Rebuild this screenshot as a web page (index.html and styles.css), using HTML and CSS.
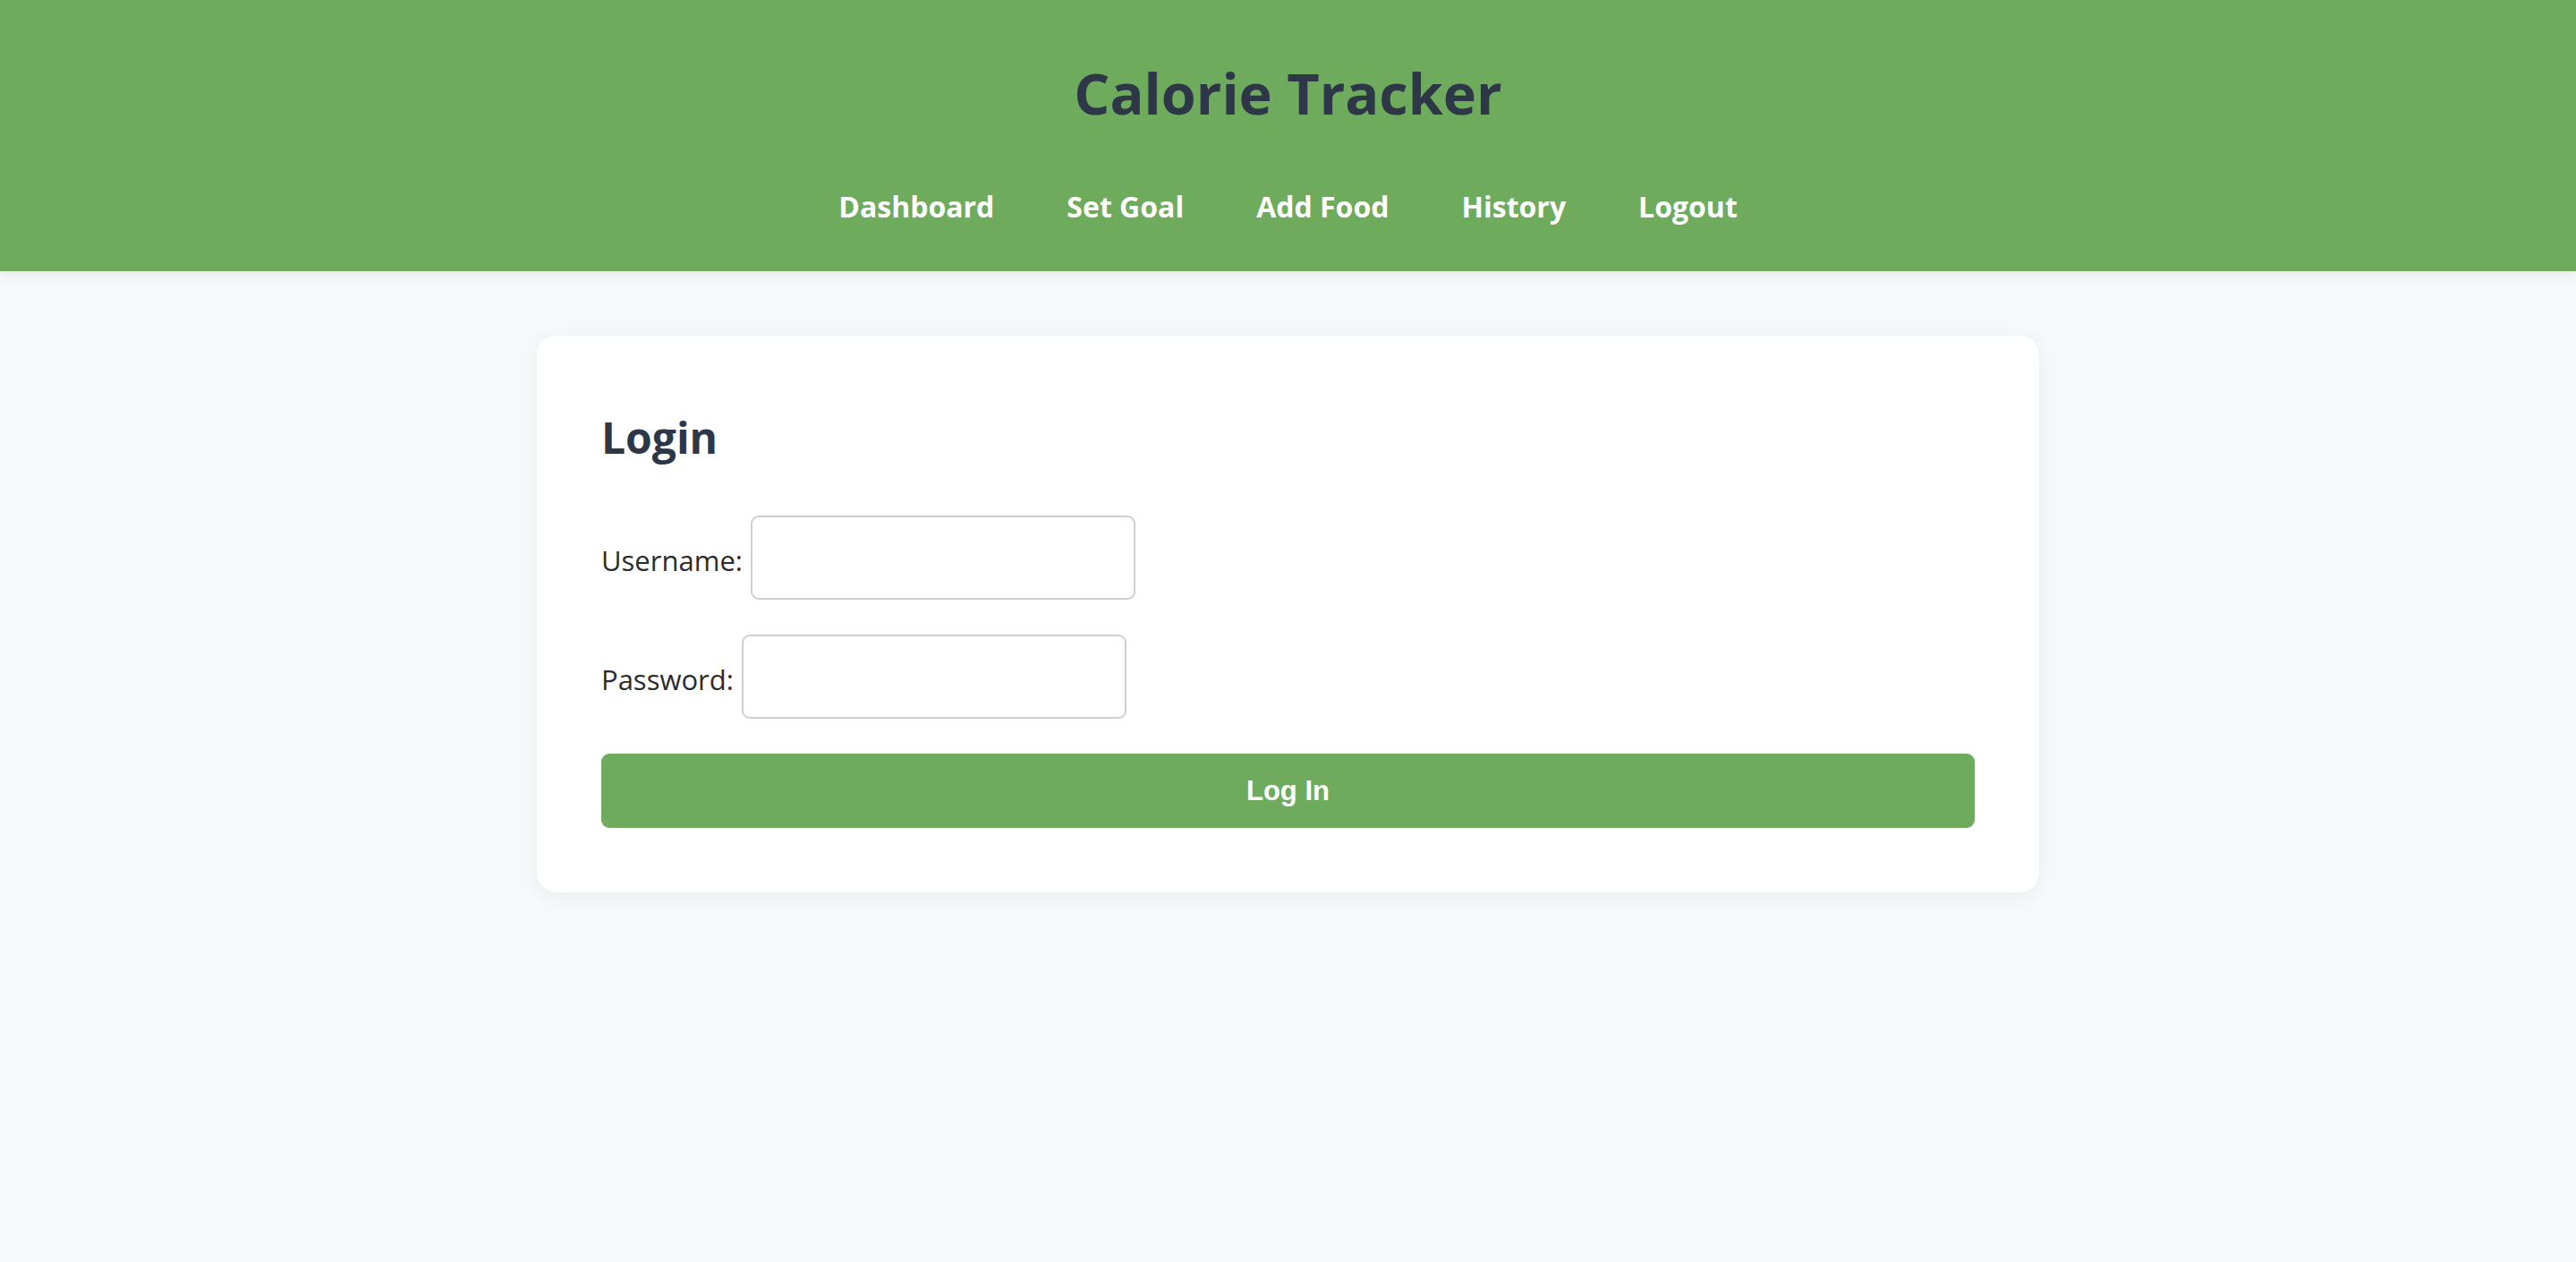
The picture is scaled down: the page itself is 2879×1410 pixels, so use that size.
FILE: index.html
```html
<!DOCTYPE html>
<html lang="en">
<head>
<meta charset="utf-8">
<title>Calorie Tracker</title>
<link rel="stylesheet" href="styles.css">
</head>
<body>
<header class="site-header">
  <h1 class="site-title">Calorie Tracker</h1>
  <nav class="site-nav">
    <a href="#" class="nav-link">Dashboard</a>
    <a href="#" class="nav-link">Set Goal</a>
    <a href="#" class="nav-link">Add Food</a>
    <a href="#" class="nav-link">History</a>
    <a href="#" class="nav-link">Logout</a>
  </nav>
</header>
<main class="container">
  <section class="card">
    <h2 class="card-title">Login</h2>
    <form class="login-form">
      <div class="form-row">
        <label class="form-label" for="username">Username:</label>
        <input class="form-input" type="text" id="username">
      </div>
      <div class="form-row">
        <label class="form-label" for="password">Password:</label>
        <input class="form-input" type="password" id="password">
      </div>
      <button class="btn-primary" type="button">Log In</button>
    </form>
  </section>
</main>
</body>
</html>
```
FILE: styles.css
```css
* { box-sizing: border-box; }
html, body { margin: 0; padding: 0; }
body {
  background: #f7f8fa;
  font-family: "Open Sans", "Noto Sans", sans-serif;
  color: #333;
  min-height: 1410px;
}
.site-header {
  background: #6fab5c;
  padding: 66px 0 54px;
  text-align: center;
  box-shadow: 0 3px 12px rgba(0, 0, 0, 0.08);
}
.site-title {
  margin: 0 0 70px;
  font-size: 63px;
  line-height: 1.2;
  font-weight: 700;
  color: #2d3748;
}
.site-nav {
  display: flex;
  justify-content: center;
  gap: 81px;
}
.nav-link {
  color: #fff;
  text-decoration: none;
  font-weight: 700;
  font-size: 32px;
  line-height: 1.16;
}
.container {
  padding-top: 72px;
}
.card {
  width: 1679px;
  margin: 0 auto;
  background: #fff;
  border-radius: 22px;
  padding: 72px;
  box-shadow: 0 4px 22px rgba(0, 0, 0, 0.05);
}
.card-title {
  margin: 13px 0 59px;
  font-size: 48px;
  line-height: 1.2;
  font-weight: 700;
  color: #2d3748;
}
.login-form {
  display: flex;
  flex-direction: column;
  gap: 39px;
}
.form-row {
  display: flex;
  align-items: center;
  gap: 9px;
}
.form-label {
  font-size: 31px;
  color: #2b2b2b;
  padding-top: 6px;
}
.form-input {
  width: 430px;
  height: 94px;
  border: 2px solid #cfcfcf;
  border-radius: 9px;
  background: #fff;
  font-size: 29px;
  padding: 0 16px;
}
.btn-primary {
  height: 83px;
  width: 100%;
  border: none;
  border-radius: 9px;
  background: #6fab5c;
  color: #fff;
  font-family: "Liberation Sans", Arial, sans-serif;
  font-weight: 700;
  font-size: 31px;
}
```
